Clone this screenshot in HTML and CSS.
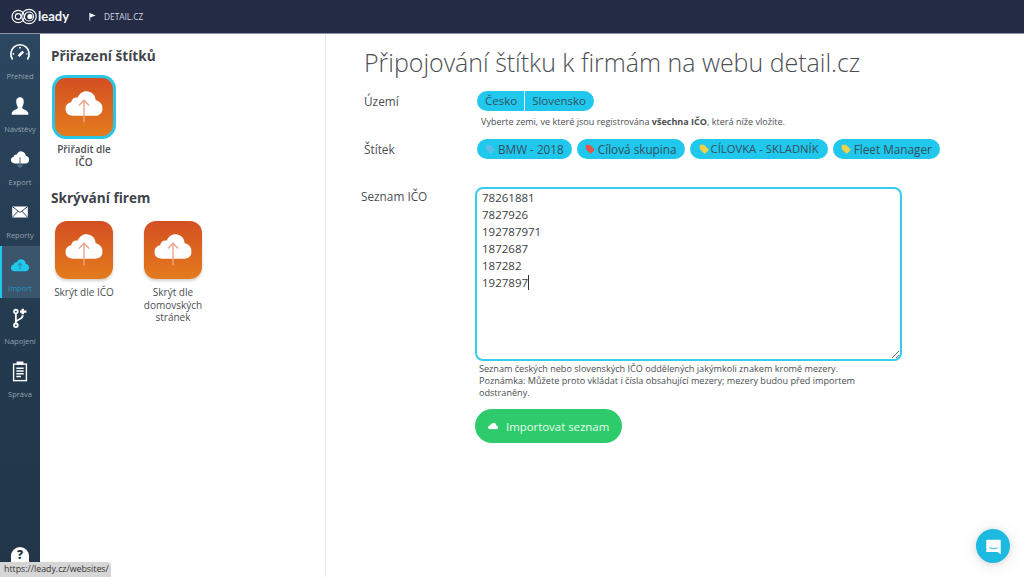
FILE: index.html
```html
<!DOCTYPE html>
<html lang="cs">
<head>
<meta charset="utf-8">
<title>Leady</title>
<link rel="stylesheet" href="styles.css">
</head>
<body>
<svg class="defs" width="0" height="0">
  <defs>
    <symbol id="cloud" viewBox="0 0 58 42"><path d="M12 40C5 40 0 35.500 0 29.500C0 24 4 20 9 19C10 14 14 11 19 12C22 5 28 1 34 2C42 3 47 9 47 16C53 17 58 22 58 29C58 35 53 40 47 40Z"/></symbol>
    <symbol id="tag" viewBox="0 0 14 14"><path d="M1 2.500Q1 1 2.500 1H7L13 7Q14 8 13 9L9 13Q8 14 7 13L1 7Z"/></symbol>
  </defs>
</svg>
<header class="topbar">
  <div class="logo">
    <svg class="logo-mark" viewBox="0 0 30 18" fill="none" stroke="#fff" stroke-width="1.300"><circle cx="8" cy="9" r="6.800"/><circle cx="8" cy="9" r="3.200"/><circle cx="20" cy="9" r="8"/><circle cx="20" cy="9" r="5"/><circle cx="21" cy="9" r="2.200" fill="#fff"/></svg>
    <span class="logo-text">leady</span>
  </div>
  <svg class="flag" viewBox="0 0 10 10"><path d="M1.500 1V9.500H2.500V6L8.500 4L2.500 1.500V1Z"/></svg>
  <span class="site">DETAIL.CZ</span>
</header>
<div class="shell">
  <nav class="rail">
    <a class="nav-item">
      <svg class="nav-icon" viewBox="0 0 24 24" fill="none" stroke="#fff" stroke-width="1.800"><path d="M4 19A10 10 0 1 1 20 19"/><path d="M10.500 15.500L15.500 10.500" stroke-width="2.800"/><path d="M4 13H5.500M19 13H20M12 5.500V7"/></svg>
      <span>Přehled</span>
    </a>
    <a class="nav-item">
      <svg class="nav-icon" viewBox="0 0 24 24" fill="#fff"><path d="M12 2.500C15 2.500 16.500 5 16 8.500C15.700 11 14.800 12.500 14.300 13.500C14.300 15.500 20 16 21 19.500V21.500H3V19.500C4 16 9.700 15.500 9.700 13.500C9.200 12.500 8.300 11 8 8.500C7.500 5 9 2.500 12 2.500Z"/></svg>
      <span>Návštěvy</span>
    </a>
    <a class="nav-item">
      <svg class="nav-icon" viewBox="0 0 24 24"><use href="#cloud" x="2" y="3" width="20" height="14.500" fill="#fff"/><path d="M12 10V21M9 18L12 21L15 18" fill="none" stroke="#5d7487" stroke-width="1.200"/></svg>
      <span>Export</span>
    </a>
    <a class="nav-item">
      <svg class="nav-icon" viewBox="0 0 24 24"><rect x="3.500" y="6" width="17" height="12" fill="#fff"/><path d="M3.500 6L12 12.500L20.500 6M3.500 18L10 11M20.500 18L14 11" fill="none" stroke="#23394d" stroke-width="1"/></svg>
      <span>Reporty</span>
    </a>
    <a class="nav-item active">
      <svg class="nav-icon" viewBox="0 0 24 24"><use href="#cloud" x="2" y="5" width="20" height="14.500" fill="#1fc8ec"/><path d="M12 17V10M9.500 12.500L12 10L14.500 12.500" fill="none" stroke="#2f8ba8" stroke-width="1.200"/></svg>
      <span>Import</span>
    </a>
    <a class="nav-item">
      <svg class="nav-icon" viewBox="0 0 24 24" fill="none" stroke="#fff" stroke-width="2"><circle cx="7.500" cy="5" r="2"/><circle cx="7.500" cy="20" r="2"/><path d="M7.500 7V18M7.500 16C9 13 15 14 15 9"/><path d="M15 2V8M12 5H19" stroke-width="2.600"/></svg>
      <span>Napojení</span>
    </a>
    <a class="nav-item">
      <svg class="nav-icon" viewBox="0 0 24 24" fill="none" stroke="#fff" stroke-width="1.500"><rect x="5" y="4.500" width="14" height="18"/><path d="M9 4.500V2.500H15V4.500Z" fill="#fff"/><path d="M8 9H16M8 12H16M8 15H16M8 18H13"/></svg>
      <span>Správa</span>
    </a>
    <span class="help">?</span>
  </nav>
  <aside class="panel">
    <h2 class="panel-title">Přiřazení štítků</h2>
    <div class="tiles">
      <a class="tile">
        <span class="tile-icon selected"><svg class="tile-cloud" viewBox="0 0 58 42"><use href="#cloud" fill="#fff"/><path class="tile-arrow" d="M29 50V16M21 24L29 16L37 24"/></svg></span>
        <span class="tile-label">Přiřadit dle IČO</span>
      </a>
    </div>
    <h2 class="panel-title second">Skrývání firem</h2>
    <div class="tiles wide">
      <a class="tile">
        <span class="tile-icon"><svg class="tile-cloud" viewBox="0 0 58 42"><use href="#cloud" fill="#fff"/><path class="tile-arrow" d="M29 50V16M21 24L29 16L37 24"/></svg></span>
        <span class="tile-label">Skrýt dle IČO</span>
      </a>
      <a class="tile">
        <span class="tile-icon"><svg class="tile-cloud" viewBox="0 0 58 42"><use href="#cloud" fill="#fff"/><path class="tile-arrow" d="M29 50V16M21 24L29 16L37 24"/></svg></span>
        <span class="tile-label">Skrýt dle domovských stránek</span>
      </a>
    </div>
  </aside>
  <main class="content">
    <h1 class="page-title">Připojování štítku k firmám na webu detail.cz</h1>
    <div class="row row-territory">
      <label class="row-label">Území</label>
      <div class="row-body">
        <div class="segmented"><span class="seg">Česko</span><span class="seg">Slovensko</span></div>
        <p class="hint">Vyberte zemi, ve které jsou registrována <b>všechna IČO</b>, která níže vložíte.</p>
      </div>
    </div>
    <div class="row row-tags">
      <label class="row-label">Štítek</label>
      <div class="chips">
        <span class="chip"><svg class="tag tag-blue" viewBox="0 0 14 14"><use href="#tag"/></svg>BMW - 2018</span>
        <span class="chip"><svg class="tag tag-red" viewBox="0 0 14 14"><use href="#tag"/></svg>Cílová skupina</span>
        <span class="chip chip-caps"><svg class="tag tag-yellow" viewBox="0 0 14 14"><use href="#tag"/></svg>CÍLOVKA - SKLADNÍK</span>
        <span class="chip"><svg class="tag tag-yellow" viewBox="0 0 14 14"><use href="#tag"/></svg>Fleet Manager</span>
      </div>
    </div>
    <div class="row row-list">
      <label class="row-label list-label">Seznam IČO</label>
      <div class="list-body">
        <textarea class="ico-list" spellcheck="false">78261881
7827926
192787971
1872687
187282
1927897</textarea>
        <span class="caret"></span>
        <p class="help-text">Seznam českých nebo slovenských IČO oddělených jakýmkoli znakem kromě mezery.<br>Poznámka: Můžete proto vkládat i čísla obsahující mezery; mezery budou před importem odstraněny.</p>
        <button class="import-btn" type="button"><svg class="btn-cloud" viewBox="0 0 58 42"><use href="#cloud" fill="#fff"/></svg>Importovat seznam</button>
      </div>
    </div>
  </main>
</div>
<div class="status-tip">https://leady.cz/websites/</div>
<div class="chat-bubble">
  <svg viewBox="0 0 20 20" class="chat-icon"><path d="M2.500 2H17.500Q18.500 2 18.500 3V19L14.500 16.500H2.500Q1.500 16.500 1.500 15.500V3Q1.500 2 2.500 2Z" fill="#fff"/><path d="M5 11.500Q10 14 15 11.500" fill="none" stroke="#1cb9e0" stroke-width="1.100"/></svg>
</div>
</body>
</html>
```
FILE: styles.css
```css
* { box-sizing: border-box; }
html, body { margin: 0; height: 577px; overflow: hidden; }
body { font-family: "Open Sans", "Noto Sans", sans-serif; color: #444; background: #fff; position: relative; }
.defs { position: absolute; }

.topbar { height: 34px; background: #232c44; display: flex; align-items: center; padding-left: 11px; color: #d5dae3; border-bottom: 1px solid #8f97a6; }
.logo { display: flex; align-items: center; width: 77px; }
.logo-mark { width: 27px; height: 17px; }
.logo-text { font-family: "Lato", sans-serif; font-weight: 700; font-size: 13px; color: #f2f4f7; line-height: 17px; }
.flag { width: 9px; height: 9px; fill: #f4f5f7; margin-right: 7px; }
.site { font-size: 8.300px; }

.shell { display: flex; height: 543px; }
.rail { width: 40px; flex: none; background: linear-gradient(#2c4760, #23394d 60%, #233649); display: flex; flex-direction: column; position: relative; }
.nav-item { height: 53px; display: flex; flex-direction: column; align-items: center; font-size: 7.500px; color: #94a3b1; line-height: 11px; padding-top: 7px; border-left: 2px solid transparent; }
.nav-item span { margin-left: -2px; margin-top: 6px; }
.nav-icon { width: 22px; height: 24px; flex: none; margin-left: -2px; }
.nav-item.active { background: #3b566c; border-left-color: #1fc8ec; height: 52px; margin-bottom: 1px; }
.nav-item.active span { color: #1a9ac0; }
.help { position: absolute; left: 11px; top: 513px; width: 18px; height: 15px; border-radius: 9px 9px 0 0; background: #fff; color: #233649; font-weight: 800; font-size: 12px; line-height: 15px; text-align: center; }

.panel { width: 286px; flex: none; border-right: 1px solid #e6e8ea; padding: 12px 0 0 11px; }
.panel-title { margin: 0; font-size: 13.600px; line-height: 20px; font-weight: 700; color: #40444a; }
.panel-title.second { margin-top: 20px; }
.tiles { display: flex; margin-top: 12px; }
.tiles.wide { margin-top: 13px; }
.tile { width: 66px; margin-right: 23px; display: flex; flex-direction: column; align-items: center; font-size: 10px; line-height: 12.500px; color: #4a4e52; text-align: center; }
.tile-icon { width: 58px; height: 58px; border-radius: 12px; background: linear-gradient(#d34f22, #e47c1e); display: flex; align-items: center; justify-content: center; box-shadow: 0 2px 3px rgba(0, 0, 0, .18); overflow: hidden; }
.tile-icon.selected { width: 64px; height: 64px; border: 3px solid #2bc6e4; border-radius: 14px; box-shadow: none; margin-top: -3px; }
.tile-cloud { width: 38px; height: 27px; overflow: visible; margin-top: -7px; }
.tile-arrow { fill: none; stroke: #eba58d; stroke-width: 2.200; }
.tile-label { margin-top: 7px; }
.tile-icon.selected + .tile-label { margin-top: 4px; width: 62px; font-weight: 600; }

.content { flex: 1; padding: 12px 0 0 36px; }
.page-title { margin: 0 0 0 2px; font-size: 24.950px; line-height: 32px; font-weight: 300; color: #4b4f54; }
.row { display: flex; }
.row-label { width: 115px; flex: none; font-size: 11.800px; line-height: 16px; color: #4a4e52; padding-left: 2px; }
.row-territory { margin-top: 13px; }
.row-territory .row-label { padding-top: 2px; }
.segmented { display: flex; width: max-content; }
.seg { height: 20px; background: #1fc8ec; font-size: 11.500px; line-height: 20px; color: #35505f; padding: 0 8px; }
.seg:first-child { border-radius: 10px 0 0 10px; border-right: 1px solid #e8f8fc; padding-right: 7px; }
.seg:last-child { border-radius: 0 10px 10px 0; padding-left: 7px; }
.hint { margin: 5px 0 0 4px; font-size: 9.050px; line-height: 12px; color: #4a4e52; }
.row-tags { margin-top: 11px; }
.row-tags .row-label { padding-top: 2px; }
.chips { display: flex; gap: 5px; }
.chip { height: 20px; background: #1fc8ec; border-radius: 10px; font-size: 11.750px; line-height: 20px; color: #35505f; padding: 0 8px; display: flex; align-items: center; white-space: nowrap; }
.chip-caps { font-size: 11.300px; padding: 0 9px; }
.chip-caps .tag { margin-right: 2px; }
.tag { width: 10px; height: 10px; margin-right: 3px; flex: none; }
.tag-blue { fill: #5cbfe8; }
.tag-red { fill: #e2574c; }
.tag-yellow { fill: #f0d24a; }
.row-list { margin-top: 28px; }
.list-label { width: 113px; padding-left: 0; margin-left: -1px; padding-top: 1px; margin-right: 1px; }
.list-body { width: 427px; position: relative; }
.ico-list { display: block; width: 427px; height: 174px; border: 2px solid #35cde9; border-radius: 8px; padding: 0 5px; margin: 0; font: 11.500px/17px "Open Sans", sans-serif; color: #3a3d42; outline: none; }
.caret { position: absolute; left: 53px; top: 88px; width: 1px; height: 15px; background: #333; }
.help-text { margin: 2px 0 0 4px; font-size: 9.100px; line-height: 12px; color: #4a4e52; width: 395px; }
.import-btn { margin-top: 10px; width: 147px; height: 34px; border: 0; border-radius: 17px; background: #2ecb6c; color: #e8fbef; font: 11.400px "Open Sans", sans-serif; display: flex; align-items: center; padding: 0 0 0 13px; }
.btn-cloud { width: 10px; height: 8px; margin-right: 8px; }

.status-tip { position: absolute; left: 0; bottom: 0; height: 15px; width: 111px; background: #d6d6d6; border-top-right-radius: 4px; font-size: 8.800px; line-height: 15px; padding-left: 4px; color: #333; white-space: nowrap; }
.chat-bubble { position: absolute; left: 976px; top: 529px; width: 34px; height: 34px; border-radius: 50%; background: #1cb9e0; display: flex; align-items: center; justify-content: center; box-shadow: 0 1px 6px rgba(0, 0, 0, .12), 0 2px 20px rgba(0, 0, 0, .08); }
.chat-icon { width: 17px; height: 17px; }
```
